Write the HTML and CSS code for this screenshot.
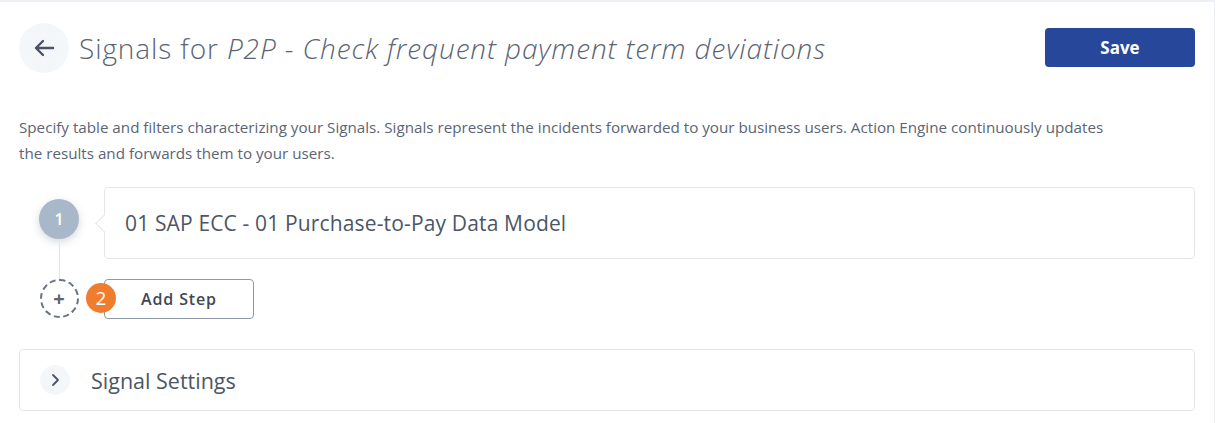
FILE: index.html
```html
<!DOCTYPE html>
<html>
<head>
<meta charset="utf-8">
<link rel="stylesheet" href="styles.css">
</head>
<body>
<div class="page">
  <header class="header">
    <div class="header-left">
      <button class="back-btn" aria-label="Back">
        <svg width="22" height="18" viewBox="0 0 22 18"><path d="M20 9H3M10 2L3 9l7 7" fill="none" stroke="#4a5465" stroke-width="2.4" stroke-linecap="round" stroke-linejoin="round"/></svg>
      </button>
      <h1 class="title">Signals for <em>P2P - Check frequent payment term deviations</em></h1>
    </div>
    <button class="save-btn">Save</button>
  </header>
  <p class="desc">Specify table and filters characterizing your Signals. Signals represent the incidents forwarded to your business users. Action Engine continuously updates the results and forwards them to your users.</p>
  <div class="steps">
    <div class="step">
      <div class="step-rail">
        <div class="step-num">1</div>
        <div class="step-line"></div>
      </div>
      <div class="step-card">01 SAP ECC - 01 Purchase-to-Pay Data Model</div>
    </div>
    <div class="step add">
      <div class="step-rail">
        <div class="add-circle">+</div>
      </div>
      <button class="add-btn">Add Step</button>
      <span class="badge">2</span>
    </div>
  </div>
  <div class="settings">
    <span class="chev">
      <svg width="10" height="14" viewBox="0 0 10 14"><path d="M3 2l5 5-5 5" fill="none" stroke="#4a5465" stroke-width="1.8" stroke-linecap="round" stroke-linejoin="round"/></svg>
    </span>
    <span class="settings-title">Signal Settings</span>
  </div>
</div>
</body>
</html>
```
FILE: styles.css
```css
html, body {
  margin: 0;
  padding: 0;
  background: #ffffff;
}
body {
  font-family: "Open Sans", Lato, "Liberation Sans", sans-serif;
  color: #5b6575;
}
.page {
  width: 1214px;
  height: 421px;
  border-top: 2px solid #edf1f5;
  border-right: 1px solid #eceff3;
  box-sizing: content-box;
  overflow: hidden;
}
.header {
  display: flex;
  align-items: center;
  justify-content: space-between;
  padding: 21px 19px 0 19px;
  height: 50px;
}
.header-left {
  display: flex;
  align-items: center;
  gap: 10px;
}
.back-btn {
  width: 50px;
  height: 50px;
  border-radius: 50%;
  border: none;
  background: #f4f7fa;
  display: flex;
  align-items: center;
  justify-content: center;
  padding: 0;
}
.title {
  margin: 0;
  font-size: 28px;
  font-weight: 300;
  letter-spacing: 0.9px;
  color: #5a6474;
}
.title em {
  font-style: italic;
  letter-spacing: 0.9px;
}
.save-btn {
  width: 150px;
  height: 39px;
  border: none;
  border-radius: 4px;
  background: #27479a;
  color: #ffffff;
  font-family: inherit;
  font-size: 17px;
  font-weight: 700;
  margin-top: -1px;
}
.desc {
  margin: 41px 19px 0 19px;
  max-width: 1095px;
  font-size: 15.2px;
  line-height: 26px;
  color: #5b6575;
}
.steps {
  margin: 21px 19px 0 39px;
}
.step {
  display: flex;
  gap: 25px;
  position: relative;
}
.step-rail {
  width: 40px;
  display: flex;
  flex-direction: column;
  align-items: center;
  flex-shrink: 0;
}
.step-num {
  margin-top: 12px;
  width: 40px;
  height: 40px;
  border-radius: 50%;
  background: #a9b8c8;
  color: #ffffff;
  font-size: 16px;
  font-weight: 600;
  display: flex;
  align-items: center;
  justify-content: center;
  box-shadow: 0 3px 8px rgba(60, 80, 110, 0.22);
}
.step-line {
  flex: 1;
  width: 1px;
  background: #e3e7ec;
}
.step-card {
  flex: 1;
  height: 72px;
  box-sizing: border-box;
  border: 1px solid #e3e7ec;
  border-radius: 4px;
  margin-bottom: 20px;
  display: flex;
  align-items: center;
  padding-left: 20px;
  font-size: 21px;
  letter-spacing: 0.15px;
  color: #4c5666;
  position: relative;
}
.step-card::before {
  content: "";
  position: absolute;
  left: -7px;
  top: 29px;
  width: 12px;
  height: 12px;
  background: #ffffff;
  border-left: 1px solid #e3e7ec;
  border-bottom: 1px solid #e3e7ec;
  transform: rotate(45deg);
}
.add-circle {
  width: 39px;
  height: 39px;
  box-sizing: border-box;
  border: 2px dashed #6b7484;
  border-radius: 50%;
  display: flex;
  align-items: center;
  justify-content: center;
  font-size: 20px;
  font-weight: 700;
  color: #5b6575;
}
.add-btn {
  width: 150px;
  height: 40px;
  border: 1px solid #8e99a8;
  border-radius: 4px;
  background: #ffffff;
  font-family: inherit;
  font-size: 16px;
  font-weight: 600;
  letter-spacing: 0.85px;
  color: #3f4856;
  padding: 0;
}
.badge {
  position: absolute;
  left: 47px;
  top: 4px;
  width: 30px;
  height: 30px;
  border-radius: 50%;
  background: #f07d2e;
  color: #ffffff;
  font-size: 19px;
  display: flex;
  align-items: center;
  justify-content: center;
}
.settings {
  margin: 30px 19px 0 19px;
  height: 62px;
  box-sizing: border-box;
  border: 1px solid #e3e7ec;
  border-radius: 4px;
  display: flex;
  align-items: center;
  padding-left: 20px;
  gap: 21px;
}
.chev {
  width: 30px;
  height: 30px;
  border-radius: 50%;
  background: #f4f7fa;
  display: flex;
  align-items: center;
  justify-content: center;
}
.settings-title {
  font-size: 21.5px;
  color: #4c5666;
}
```
